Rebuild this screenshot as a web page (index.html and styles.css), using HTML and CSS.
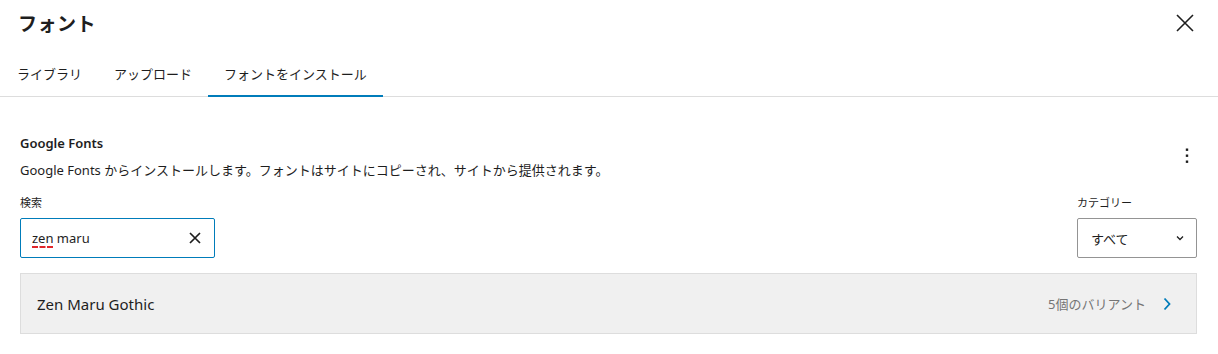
FILE: index.html
```html
<!DOCTYPE html>
<html lang="ja">
<head>
<meta charset="utf-8">
<link rel="stylesheet" href="styles.css">
</head>
<body>
<div class="modal">
  <header class="modal-header">
    <h1 class="modal-title">フォント</h1>
    <button class="icon-btn close-btn" aria-label="閉じる">
      <svg width="24" height="24" viewBox="0 0 24 24"><path d="M4 4 L20 20 M20 4 L4 20" stroke="#1e1e1e" stroke-width="1.6" fill="none"/></svg>
    </button>
  </header>
  <nav class="tabs">
    <button class="tab">ライブラリ</button>
    <button class="tab">アップロード</button>
    <button class="tab active">フォントをインストール</button>
  </nav>
  <section class="content">
    <div class="intro">
      <div class="intro-text">
        <h2 class="section-title">Google Fonts</h2>
        <p class="section-desc">Google Fonts からインストールします。フォントはサイトにコピーされ、サイトから提供されます。</p>
      </div>
      <button class="icon-btn more-btn" aria-label="オプション">
        <svg width="24" height="24" viewBox="0 0 24 24"><rect x="10.8" y="5.5" width="2.4" height="2.4" fill="#1e1e1e"/><rect x="10.8" y="11.5" width="2.4" height="2.4" fill="#1e1e1e"/><rect x="10.8" y="17.5" width="2.4" height="2.4" fill="#1e1e1e"/></svg>
      </button>
    </div>
    <div class="filters">
      <div class="field">
        <label class="field-label">検索</label>
        <div class="search-box">
          <span class="search-value"><span class="misspelled">zen</span> maru</span>
          <svg class="clear-icon" width="24" height="24" viewBox="0 0 24 24"><path d="M7 7 L17 17 M17 7 L7 17" stroke="#1e1e1e" stroke-width="1.7" fill="none"/></svg>
        </div>
      </div>
      <div class="field">
        <label class="field-label">カテゴリー</label>
        <div class="select-box">
          <span>すべて</span>
          <svg width="14" height="14" viewBox="0 0 14 14"><path d="M4 5.5 L7 8.5 L10 5.5" stroke="#1e1e1e" stroke-width="1.3" fill="none"/></svg>
        </div>
      </div>
    </div>
    <div class="font-card">
      <span class="font-name">Zen Maru Gothic</span>
      <span class="font-meta">
        <span class="variants">5個のバリアント</span>
        <svg width="24" height="24" viewBox="0 0 24 24"><path d="M9.5 6.5 L14.5 12 L9.5 17.5" stroke="#007cba" stroke-width="1.8" fill="none"/></svg>
      </span>
    </div>
  </section>
</div>
</body>
</html>
```
FILE: styles.css
```css
* { box-sizing: border-box; }
html, body { margin: 0; padding: 0; background: #fff; }
body {
  font-family: "Noto Sans", "Noto Sans CJK JP", sans-serif;
  color: #1e1e1e;
  width: 1218px;
  height: 354px;
  overflow: hidden;
}
button { font: inherit; color: inherit; background: none; border: 0; padding: 0; cursor: pointer; }

.modal-header {
  height: 45px;
  padding: 0 21px 0 18px;
  display: flex;
  align-items: center;
  justify-content: space-between;
}
.modal-title {
  margin: 0;
  font-size: 19px;
  font-weight: 700;
  font-family: "Noto Sans CJK JP", sans-serif;
  letter-spacing: 0.5px;
}
.icon-btn { display: flex; align-items: center; justify-content: center; width: 24px; height: 24px; }

.tabs {
  margin-top: 4px;
  display: flex;
  border-bottom: 1px solid #dddddd;
  padding-left: 1px;
}
.tab {
  height: 48px;
  padding: 0 16px;
  font-size: 13px;
  font-family: "Noto Sans CJK JP", sans-serif;
  color: #1e1e1e;
  margin-bottom: -1px;
  border-bottom: 2px solid transparent;
  padding-top: 2px;
}
.tab.active { border-bottom-color: #007cba; }

.content { padding: 36px 21px 0 20px; }
.intro { display: flex; align-items: center; justify-content: space-between; }
.section-title {
  margin: 0;
  font-size: 13px;
  font-weight: 600;
  line-height: 20px;
}
.section-desc {
  margin: 7px 0 0;
  font-size: 13px;
  line-height: 20px;
  font-family: "Noto Sans", "Noto Sans CJK JP", sans-serif;
}
.more-btn { margin-right: -2px; margin-top: -3px; }

.filters {
  margin-top: 14px;
  display: flex;
  justify-content: space-between;
  align-items: flex-end;
}
.field { display: flex; flex-direction: column; }
.field-label {
  font-size: 11px;
  line-height: 16px;
  font-family: "Noto Sans CJK JP", sans-serif;
  margin-bottom: 8px;
}
.search-box {
  width: 195px;
  height: 40px;
  border: 1.5px solid #007cba;
  border-radius: 2px;
  display: flex;
  align-items: center;
  justify-content: space-between;
  padding: 0 7px 0 11px;
  font-size: 13px;
}
.misspelled {
  text-decoration: underline dashed #e0262b;
  text-decoration-thickness: 1.5px;
  text-underline-offset: 3px;
}
.select-box {
  width: 120px;
  height: 40px;
  border: 1px solid #949494;
  border-radius: 2px;
  display: flex;
  align-items: center;
  justify-content: space-between;
  padding: 0 9px 0 13px;
  font-size: 13px;
  font-family: "Noto Sans CJK JP", sans-serif;
}

.font-card {
  margin-top: 15px;
  height: 61px;
  background: #f0f0f0;
  border: 1px solid #dddddd;
  display: flex;
  align-items: center;
  justify-content: space-between;
  padding: 0 17px 0 16px;
}
.font-name { font-size: 15px; font-family: "Noto Sans", "Noto Sans CJK JP", sans-serif; }
.font-meta { display: flex; align-items: center; gap: 9px; }
.variants { font-size: 13px; color: #757575; font-family: "Noto Sans", "Noto Sans CJK JP", sans-serif; }
```
